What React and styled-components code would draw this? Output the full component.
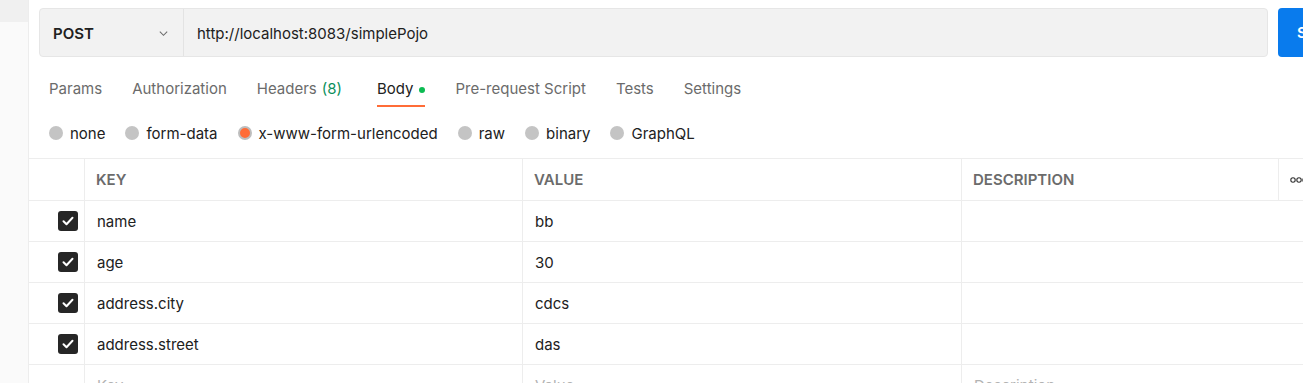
import React from "react";
import styled, { createGlobalStyle } from "styled-components";

const GlobalStyle = createGlobalStyle`
	html, body {
		margin: 0;
		padding: 0;
		background: #fff;
		overflow: hidden;
	}
	body {
		font-family: Inter, "Noto Sans", sans-serif;
		font-size: 15px;
		color: #212121;
	}
`;

const tabs = [
	{ label: "Params" },
	{ label: "Authorization" },
	{ label: "Headers", count: "(8)" },
	{ label: "Body", active: true, dot: true },
	{ label: "Pre-request Script" },
	{ label: "Tests" },
	{ label: "Settings" },
];

const bodyTypes = ["none", "form-data", "x-www-form-urlencoded", "raw", "binary", "GraphQL"];

const rows = [
	{ key: "name", value: "bb" },
	{ key: "age", value: "30" },
	{ key: "address.city", value: "cdcs" },
	{ key: "address.street", value: "das" },
];

const App = () => {
	return (
		<>
			<GlobalStyle />
			<Page>
				<Sidebar>
					<SidebarItem />
				</Sidebar>
				<Main>
					<RequestBar>
						<UrlGroup>
							<MethodSelect>
								<span>POST</span>
								<svg width="11" height="11" viewBox="0 0 12 12">
									<path
										d="M2 4l4 4 4-4"
										fill="none"
										stroke="#6b6b6b"
										strokeWidth="1.1"
									/>
								</svg>
							</MethodSelect>
							<UrlInput>http://localhost:8083/simplePojo</UrlInput>
						</UrlGroup>
						<SendButton>Send</SendButton>
					</RequestBar>

					<Tabs>
						{tabs.map((t) => (
							<Tab key={t.label} $active={t.active}>
								{t.label}
								{t.count && <Count>{t.count}</Count>}
								{t.dot && <Dot />}
							</Tab>
						))}
					</Tabs>

					<RadioRow>
						{bodyTypes.map((b) => (
							<RadioItem key={b}>
								<Radio $checked={b === "x-www-form-urlencoded"} />
								{b}
							</RadioItem>
						))}
					</RadioRow>

					<Table>
						<HeadCell />
						<HeadCell $divider>KEY</HeadCell>
						<HeadCell $divider>VALUE</HeadCell>
						<HeadCell $divider>DESCRIPTION</HeadCell>
						<HeadCell $divider>
							<svg width="24" height="8" viewBox="0 0 24 8">
								<circle cx="3" cy="4" r="2.2" fill="none" stroke="#333" strokeWidth="1.1" />
								<circle cx="9" cy="4" r="2.2" fill="none" stroke="#333" strokeWidth="1.1" />
								<circle cx="15" cy="4" r="2.2" fill="none" stroke="#333" strokeWidth="1.1" />
							</svg>
						</HeadCell>
						{rows.map((r) => (
							<React.Fragment key={r.key}>
								<CheckCell>
									<Checkbox>
										<svg width="12" height="10" viewBox="0 0 12 10">
											<path
												d="M1.5 5.2l3 3L10.5 1.8"
												fill="none"
												stroke="#fff"
												strokeWidth="2"
												strokeLinecap="round"
												strokeLinejoin="round"
											/>
										</svg>
									</Checkbox>
								</CheckCell>
								<Cell>{r.key}</Cell>
								<Cell>{r.value}</Cell>
								<Cell />
								<Cell $noBorder />
							</React.Fragment>
						))}
						<CheckCell />
						<Cell $placeholder>Key</Cell>
						<Cell $placeholder>Value</Cell>
						<Cell $placeholder>Description</Cell>
						<Cell $noBorder />
					</Table>
				</Main>
			</Page>
		</>
	);
};

export default App;

const Page = styled.div`
	display: flex;
	width: 1303px;
	height: 383px;
	overflow: hidden;
`;

const Sidebar = styled.div`
	width: 28px;
	flex-shrink: 0;
	background: #fafafa;
	border-right: 1px solid #ededed;
`;

const SidebarItem = styled.div`
	height: 22px;
	background: #f0f0f0;
`;

const Main = styled.div`
	flex: 1;
	min-width: 0;
	display: flex;
	flex-direction: column;
	padding-top: 8px;
	& > * {
		flex-shrink: 0;
	}
`;

const RequestBar = styled.div`
	display: flex;
	gap: 10px;
	margin-left: 10px;
	height: 49px;
`;

const UrlGroup = styled.div`
	width: 1229px;
	flex-shrink: 0;
	display: flex;
	box-sizing: border-box;
	background: #f2f2f2;
	border: 1px solid #e6e6e6;
	border-radius: 4px;
`;

const MethodSelect = styled.div`
	width: 144px;
	box-sizing: border-box;
	display: flex;
	align-items: center;
	justify-content: space-between;
	padding: 1px 14px 0 13px;
	border-right: 1px solid #e3e3e3;
	font-weight: 600;
	font-size: 15px;
	color: #212121;
`;

const UrlInput = styled.div`
	display: flex;
	align-items: center;
	padding: 1px 0 0 13px;
	font-size: 15px;
	color: #212121;
`;

const SendButton = styled.div`
	width: 100px;
	flex-shrink: 0;
	background: #097bed;
	border-radius: 4px;
	color: #fff;
	font-weight: 600;
	font-size: 15px;
	display: flex;
	align-items: center;
	padding-left: 19px;
`;

const Tabs = styled.div`
	display: flex;
	gap: 30px;
	padding-left: 20px;
	padding-top: 21px;
	height: 50px;
	box-sizing: border-box;
`;

const Tab = styled.div`
	display: flex;
	align-items: flex-start;
	height: 29px;
	box-sizing: border-box;
	line-height: 22px;
	font-size: 15px;
	color: ${(p) => (p.$active ? "#212121" : "#6b6b6b")};
	border-bottom: 2px solid ${(p) => (p.$active ? "#ff6c37" : "transparent")};
`;

const Count = styled.span`
	margin-left: 5px;
	padding-right: 5px;
	color: #0c8f5c;
`;

const Dot = styled.span`
	width: 6px;
	height: 6px;
	border-radius: 50%;
	background: #0cbb52;
	margin: 9px 0 0 6px;
`;

const RadioRow = styled.div`
	display: flex;
	gap: 20px;
	padding-left: 20px;
	padding-top: 1px;
	height: 51px;
	align-items: center;
	box-sizing: border-box;
`;

const RadioItem = styled.div`
	display: flex;
	align-items: center;
	gap: 7px;
	font-size: 15px;
	color: #212121;
`;

const Radio = styled.span`
	width: 14px;
	height: 14px;
	border-radius: 50%;
	box-sizing: border-box;
	background: ${(p) => (p.$checked ? "#ff6c37" : "#c4c4c4")};
	border: ${(p) => (p.$checked ? "2px solid #bdbdbd" : "none")};
`;

const Table = styled.div`
	display: grid;
	grid-template-columns: 55px 438px 439px 317px 60px;
	grid-auto-rows: 41px;
	grid-template-rows: 42px;
	border-top: 1px solid #ededed;
`;

const HeadCell = styled.div`
	display: flex;
	align-items: center;
	padding-left: 11px;
	font-size: 15px;
	font-weight: 600;
	color: #6b6b6b;
	border-bottom: 1px solid #ededed;
	border-left: ${(p) => (p.$divider ? "1px solid #ededed" : "none")};
`;

const Cell = styled.div`
	display: flex;
	align-items: center;
	padding-left: 12px;
	font-size: 15px;
	color: ${(p) => (p.$placeholder ? "#b3b3b3" : "#212121")};
	border-bottom: 1px solid #ededed;
	border-left: ${(p) => (p.$noBorder ? "none" : "1px solid #ededed")};
`;

const CheckCell = styled.div`
	display: flex;
	align-items: center;
	justify-content: flex-end;
	padding-right: 6px;
	border-bottom: 1px solid #ededed;
`;

const Checkbox = styled.span`
	width: 20px;
	height: 20px;
	border-radius: 3px;
	background: #262626;
	display: flex;
	align-items: center;
	justify-content: center;
`;
